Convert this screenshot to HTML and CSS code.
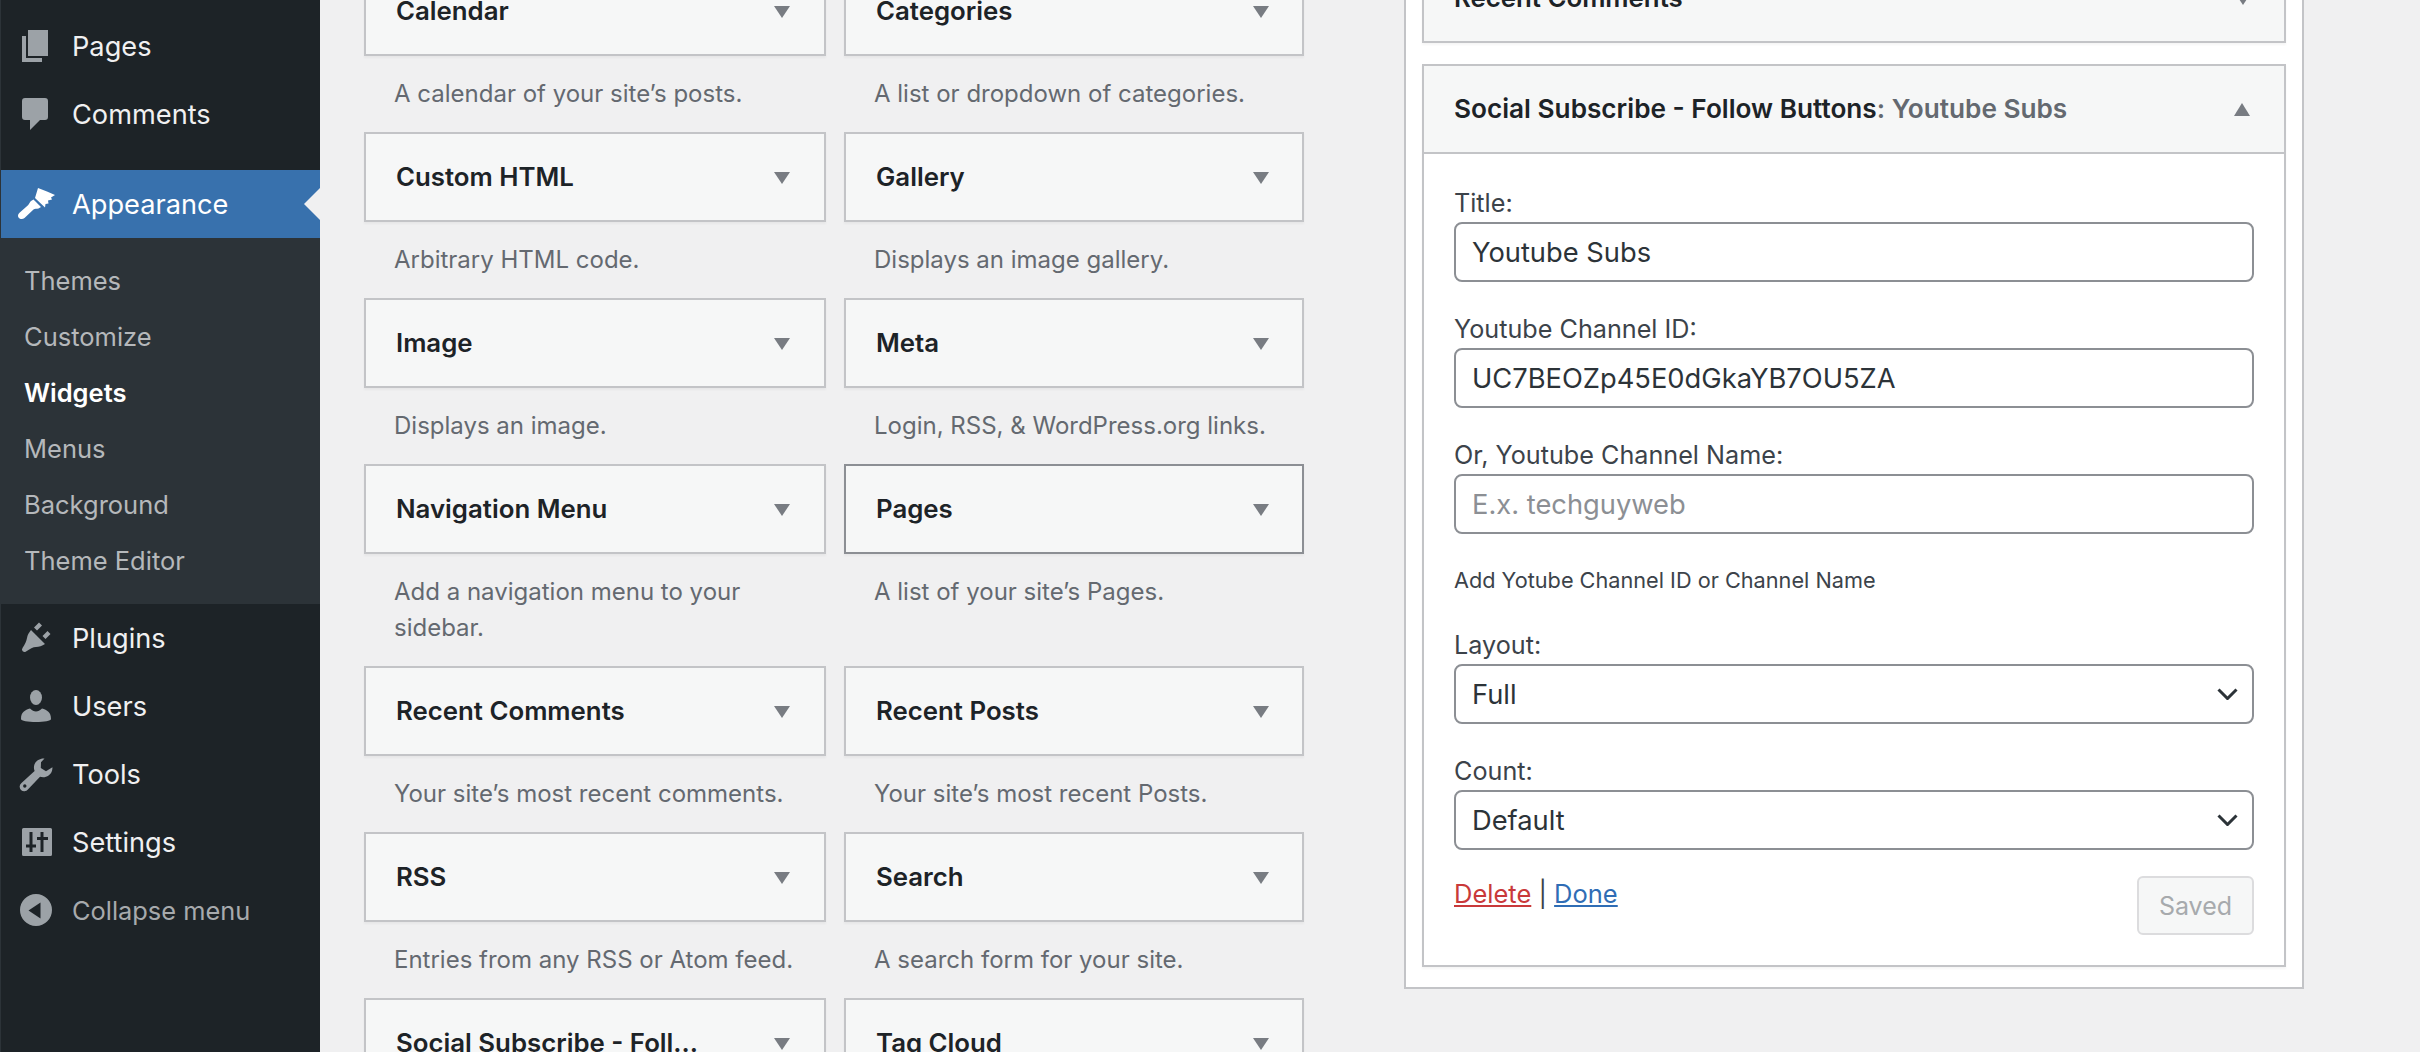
FILE: index.html
```html
<!DOCTYPE html>
<html lang="en">
<head>
  <meta charset="UTF-8" />
  <title>Widgets</title>
  <link rel="stylesheet" href="styles.css">
</head>
<body>
  <div class="page">
    <nav class="adminmenu">
      <a class="menu-item">
        <svg class="menu-icon" viewBox="0 0 40 40"><path d="M12 4h20v26H12z"/><path d="M6 10h4v22h16v4H6z"/></svg>
        <span>Pages</span>
      </a>
      <a class="menu-item">
        <svg class="menu-icon" viewBox="0 0 40 40"><path d="M9 4h20a3 3 0 0 1 3 3v16a3 3 0 0 1-3 3h-5L14 36V26H9a3 3 0 0 1-3-3V7a3 3 0 0 1 3-3z"/></svg>
        <span>Comments</span>
      </a>
      <a class="menu-item current">
        <svg class="menu-icon" viewBox="0 0 40 40"><path d="M22 4l9 3.500 8 3.500-4 2.500 1 2-4 1 .5 3-3 .5-.5 3.500L19 14z"/><path d="M17.500 15.500l7.500 7.500-2.500 1.500c-2 .5-3.500 0-5 1L8.500 34c-2 1.500-4.500 1.200-5.800-.3-1.200-1.500-.9-3.500.8-5l8.500-7.500c1.500-1.500 2-3.500 3-4.200z"/></svg>
        <span>Appearance</span>
      </a>
      <div class="submenu">
        <a>Themes</a>
        <a>Customize</a>
        <a class="active">Widgets</a>
        <a>Menus</a>
        <a>Background</a>
        <a>Theme Editor</a>
      </div>
      <a class="menu-item">
        <svg class="menu-icon" viewBox="0 0 40 40"><path d="M15 12l14 14c-3 2-6 3-9 3-3 0-6 2-10 4.500a2.500 2.500 0 0 1-3.500-3.500c2.500-4 4-7 4.500-10 .5-3 2-5.500 4-8z"/><path d="M18 9.500L23 4.500l3 3-5 5zM26.500 18l5-5 3 3-5 5z"/></svg>
        <span>Plugins</span>
      </a>
      <a class="menu-item">
        <svg class="menu-icon" viewBox="0 0 40 40"><ellipse cx="20" cy="11.500" rx="6" ry="7.500"/><path d="M5 33c0-7 4-9 9-10.500 2 2 4 3 6 3s4-1 6-3c5 1.500 9 3.500 9 10.500 0 2-7 3-15 3S5 35 5 33z"/></svg>
        <span>Users</span>
      </a>
      <a class="menu-item">
        <svg class="menu-icon" viewBox="0 0 40 40"><path fill-rule="evenodd" d="M28.500 4.500c-5-.5-10 3-10.500 8-.2 1.500 0 3 .6 4.400L5.500 29a4.600 4.600 0 1 0 6.400 6.500L24 22.800c5 1.600 10.500-.8 12-6 .4-1.200.5-2.300.4-3.600L30 17.200l-5.200-3.200.2-5.800zM8.800 30.300a1.700 1.700 0 1 1 0 3.400 1.700 1.700 0 0 1 0-3.400z"/></svg>
        <span>Tools</span>
      </a>
      <a class="menu-item">
        <svg class="menu-icon" viewBox="0 0 40 40"><path fill-rule="evenodd" d="M7.500 6h27A1.500 1.500 0 0 1 36 7.500v25a1.500 1.500 0 0 1-1.500 1.500h-27A1.500 1.500 0 0 1 6 32.500v-25A1.500 1.500 0 0 1 7.500 6zM13.500 10v12.500H10v3h3.500V30h3v-4.500H20v-3h-3.500V10zM24.500 10v5H21v3h3.500v12h3V18H32v-3h-4.500v-5z"/></svg>
        <span>Settings</span>
      </a>
      <a class="menu-item collapse">
        <svg class="menu-icon" viewBox="0 0 40 40"><path fill-rule="evenodd" d="M20 4a16 16 0 1 1 0 32 16 16 0 0 1 0-32zM24.500 12.500L12.500 20.500l12 8z"/></svg>
        <span>Collapse menu</span>
      </a>
    </nav>

    <main class="content">
      <div class="widget-grid">
        <div class="widget-item"><div class="widget-card"><h3>Calendar</h3><i class="arrow"></i></div><p>A calendar of your site’s posts.</p></div>
        <div class="widget-item"><div class="widget-card"><h3>Categories</h3><i class="arrow"></i></div><p>A list or dropdown of categories.</p></div>
        <div class="widget-item"><div class="widget-card"><h3>Custom HTML</h3><i class="arrow"></i></div><p>Arbitrary HTML code.</p></div>
        <div class="widget-item"><div class="widget-card"><h3>Gallery</h3><i class="arrow"></i></div><p>Displays an image gallery.</p></div>
        <div class="widget-item"><div class="widget-card"><h3>Image</h3><i class="arrow"></i></div><p>Displays an image.</p></div>
        <div class="widget-item"><div class="widget-card"><h3>Meta</h3><i class="arrow"></i></div><p>Login, RSS, &amp; WordPress.org links.</p></div>
        <div class="widget-item"><div class="widget-card"><h3>Navigation Menu</h3><i class="arrow"></i></div><p>Add a navigation menu to your sidebar.</p></div>
        <div class="widget-item"><div class="widget-card hover"><h3>Pages</h3><i class="arrow"></i></div><p>A list of your site’s Pages.</p></div>
        <div class="widget-item"><div class="widget-card"><h3>Recent Comments</h3><i class="arrow"></i></div><p>Your site’s most recent comments.</p></div>
        <div class="widget-item"><div class="widget-card"><h3>Recent Posts</h3><i class="arrow"></i></div><p>Your site’s most recent Posts.</p></div>
        <div class="widget-item"><div class="widget-card"><h3>RSS</h3><i class="arrow"></i></div><p>Entries from any RSS or Atom feed.</p></div>
        <div class="widget-item"><div class="widget-card"><h3>Search</h3><i class="arrow"></i></div><p>A search form for your site.</p></div>
        <div class="widget-item"><div class="widget-card"><h3>Social Subscribe - Foll...</h3><i class="arrow"></i></div></div>
        <div class="widget-item"><div class="widget-card"><h3>Tag Cloud</h3><i class="arrow"></i></div></div>
      </div>

      <aside class="sidebar-panel">
        <div class="widget-card placed"><h3>Recent Comments</h3><i class="arrow"></i></div>

        <section class="open-widget">
          <header class="open-head">
            <h3>Social Subscribe - Follow Buttons<span class="in-title">: Youtube Subs</span></h3>
            <i class="arrow up"></i>
          </header>
          <form class="open-body">
            <div class="field">
              <label>Title:</label>
              <input type="text" value="Youtube Subs" />
            </div>
            <div class="field">
              <label>Youtube Channel ID:</label>
              <input type="text" value="UC7BEOZp45E0dGkaYB7OU5ZA" />
            </div>
            <div class="field">
              <label>Or, Youtube Channel Name:</label>
              <input type="text" placeholder="E.x. techguyweb" />
            </div>
            <p class="hint">Add Yotube Channel ID or Channel Name</p>
            <div class="field">
              <label>Layout:</label>
              <select><option>Full</option></select>
            </div>
            <div class="field">
              <label>Count:</label>
              <select><option>Default</option></select>
            </div>
            <div class="actions">
              <div class="links"><a class="delete">Delete</a> | <a class="done">Done</a></div>
              <button type="button" class="saved" disabled>Saved</button>
            </div>
          </form>
        </section>
      </aside>
    </main>
  </div>
</body>
</html>
```

FILE: styles.css
```css
* {
  box-sizing: border-box;
}

html, body {
  height: 100%;
  margin: 0;
  overflow: hidden;
}

body {
  font-family: Inter, 'Liberation Sans', sans-serif;
  background: #f0f0f1;
  color: #3c434a;
}

.page {
  display: flex;
  height: 1052px;
}

/* admin menu */
.adminmenu {
  width: 320px;
  flex: none;
  padding-top: 12px;
  background: #1d2327;
  border-left: 1px solid #2c3338;
}

.menu-item {
  position: relative;
  display: flex;
  align-items: center;
  gap: 16px;
  height: 68px;
  padding-left: 15px;
  font-size: 27.2px;
  color: #f0f0f1;
}

.menu-icon {
  width: 40px;
  height: 40px;
  flex: none;
  fill: #9ca2a7;
}

.menu-item.current {
  margin-top: 22px;
  background: #3871ad;
  color: #fff;
}

.menu-item.current .menu-icon {
  fill: #fff;
}

.menu-item.current::after {
  content: "";
  position: absolute;
  right: 0;
  top: 18px;
  border: 16px solid transparent;
  border-left: 0;
  border-right-color: #f0f0f1;
}

.menu-item.collapse {
  font-size: 25.4px;
  color: #a7aaad;
}

.submenu {
  display: flex;
  flex-direction: column;
  padding: 15px 0;
  background: #2c3338;
}

.submenu a {
  height: 56px;
  line-height: 56px;
  padding-left: 23px;
  font-size: 25.5px;
  color: #b5b8bb;
}

.submenu a.active {
  font-weight: 600;
  color: #fff;
}

/* widgets */
.content {
  display: flex;
  align-items: flex-start;
  gap: 100px;
  padding-left: 44px;
}

.widget-grid {
  display: grid;
  grid-template-columns: 462px 460px;
  column-gap: 18px;
  margin-top: -34px;
}

.widget-card {
  display: flex;
  align-items: center;
  justify-content: space-between;
  height: 90px;
  padding: 0 33px 0 30px;
  background: #f6f7f7;
  border: 2px solid #c3c4c7;
  box-shadow: 0 2px 2px rgba(0,0,0,0.04);
}

.widget-item:nth-child(odd) .widget-card {
  padding-right: 34px;
}

.widget-card.hover {
  border-color: #8c8f94;
}

.widget-card h3,
.open-head h3 {
  margin: 0 0 2px;
  font-size: 25.8px;
  font-weight: 600;
  color: #1d2327;
}

.arrow {
  width: 0;
  height: 0;
  margin-top: 2px;
  border-left: 8px solid transparent;
  border-right: 8px solid transparent;
  border-top: 12px solid #787c82;
}

.arrow.up {
  margin-top: 0;
  border-left-width: 8.5px;
  border-right-width: 8.5px;
  border-top: 0;
  border-bottom: 13px solid #787c82;
}

.widget-item p {
  margin: 0;
  padding: 20px 30px;
  font-size: 24px;
  line-height: 36px;
  color: #646970;
}

/* right hand sidebar */
.sidebar-panel {
  width: 900px;
  flex: none;
  margin-top: -47px;
  padding: 0 16px 20px;
  background: #fff;
  border: 2px solid #c3c4c7;
  border-top: 0;
}

.widget-card.placed {
  margin-bottom: 21px;
  padding-left: 30px;
}

.open-widget {
  border: 2px solid #c3c4c7;
  box-shadow: 0 2px 2px rgba(0,0,0,0.04);
}

.open-head {
  display: flex;
  align-items: center;
  justify-content: space-between;
  height: 88px;
  padding: 0 34px 0 30px;
  background: #f6f7f7;
  border-bottom: 2px solid #c3c4c7;
}

.open-head h3 {
  font-size: 26.2px;
}

.in-title {
  color: #646970;
}

.open-body {
  padding: 30px;
}

.field {
  margin-bottom: 28px;
}

.field label {
  display: block;
  font-size: 25.2px;
  line-height: 38px;
}

.field input,
.field select {
  display: block;
  width: 100%;
  height: 60px;
  padding: 0 16px;
  font-family: inherit;
  font-size: 27.3px;
  color: #2c3338;
  background: #fff;
  border: 2px solid #8c8f94;
  border-radius: 8px;
  outline: none;
}

.field input::placeholder {
  color: #8c8f94;
  opacity: 1;
}

.field select {
  appearance: none;
  -webkit-appearance: none;
  background-image: url("data:image/svg+xml,%3Csvg xmlns='http://www.w3.org/2000/svg' viewBox='0 0 21 12'%3E%3Cpath d='M1.500 1.500l9 9 9-9' fill='none' stroke='%232c3338' stroke-width='3'/%3E%3C/svg%3E");
  background-repeat: no-repeat;
  background-position: right 14px center;
  background-size: 21px 12px;
}

.hint {
  margin: 0 0 31px;
  padding-top: 3px;
  font-size: 21.7px;
  line-height: 30px;
}

.actions {
  display: flex;
  align-items: flex-start;
  justify-content: space-between;
  margin-top: -2px;
}

.links {
  font-size: 25.5px;
  line-height: 36px;
}

.delete {
  color: #c9393a;
  text-decoration: underline;
}

.done {
  color: #2f6db5;
  text-decoration: underline;
}

.saved {
  width: 117px;
  height: 59px;
  font-family: inherit;
  font-size: 25px;
  color: #a7aaad;
  background: #f6f7f7;
  border: 2px solid #dcdcde;
  border-radius: 6px;
}
```
